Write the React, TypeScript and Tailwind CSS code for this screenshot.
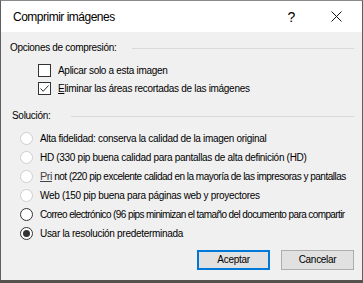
import React from "react";

function Check({ checked }: { checked?: boolean }) {
  return (
    <span className="flex h-[13px] w-[13px] shrink-0 items-center justify-center border border-[#333] bg-white">
      {checked && (
        <svg width="11" height="11" viewBox="0 0 11 11">
          <path d="M1.5 5.5 L4.2 8.3 L9.5 2.5" fill="none" stroke="#333" strokeWidth="1" />
        </svg>
      )}
    </span>
  );
}

function Radio({ disabled, checked }: { disabled?: boolean; checked?: boolean }) {
  return (
    <span
      className={`flex h-[13px] w-[13px] shrink-0 items-center justify-center rounded-full border bg-white ${
        disabled ? "border-[#cfcfcf]" : "border-[#333]"
      }`}
    >
      {checked && <span className="h-[7px] w-[7px] rounded-full bg-[#333]" />}
    </span>
  );
}

const options = [
  { label: "Alta fidelidad: conserva la calidad de la imagen original", disabled: true },
  { label: "HD (330 pip buena calidad para pantallas de alta definición (HD)", disabled: true },
  { label: "print", disabled: true },
  { label: "Web (150 pip buena para páginas web y proyectores", disabled: true },
  { label: "Correo electrónico (96 pips minimizan el tamaño del documento para compartir", tight: true },
  { label: "Usar la resolución predeterminada", checked: true },
];

export default function App() {
  return (
    <div
      className="flex h-[283px] w-[363px] flex-col overflow-hidden bg-[#55524d] text-[10px] leading-[14px] tracking-[-0.3px] text-black"
      style={{ fontFamily: '"Liberation Sans", Arial, sans-serif' }}
    >
      <div className="flex h-[280px] flex-col border-x border-t border-x-[#5f5f5f] border-t-[#8a8a8a]">
        <div className="flex h-[31px] shrink-0 items-center bg-white pl-[12px]">
          <span className="text-[12px] tracking-[-0.5px] text-black">Comprimir imágenes</span>
          <span className="ml-auto mr-[36px] text-[14px]">?</span>
          <svg width="11" height="11" viewBox="0 0 11 11" className="mr-[20px]">
            <path d="M0.5 0.5 L10.5 10.5 M10.5 0.5 L0.5 10.5" stroke="#111" strokeWidth="1" />
          </svg>
        </div>
        <div className="flex flex-1 flex-col bg-[#f0f0f0] pl-[9px] pr-[8px]">
          <div className="mt-[9px] flex h-[14px] items-center">
            <span>Opciones de compresión:</span>
            <span className="ml-[15px] h-px flex-1 bg-[#d9d9d9]" />
          </div>
          <div className="ml-[28px] mt-[9px] flex flex-col gap-[5px]">
            <div className="flex h-[13px] items-center gap-[7px]">
              <Check />
              <span>Aplicar solo a esta imagen</span>
            </div>
            <div className="flex h-[13px] items-center gap-[7px]">
              <Check checked />
              <span>
                <span className="underline">E</span>liminar las áreas recortadas de las imágenes
              </span>
            </div>
          </div>
          <div className="mt-[14px] flex h-[14px] items-center">
            <span className="ml-[2px]">Solución:</span>
            <span className="ml-[21px] h-px flex-1 bg-[#d9d9d9]" />
          </div>
          <div className="ml-[10px] mt-[9px] flex flex-col gap-[6px]">
            {options.map((o) => (
              <div key={o.label} className="flex h-[13px] items-center gap-[7px]">
                <Radio disabled={o.disabled} checked={o.checked} />
                {o.label === "print" ? (
                  <span className="whitespace-nowrap tracking-[-0.5px]">
                    <span className="text-[11px] text-[#444] underline">Pri</span> not (220 pip excelente calidad en la
                    mayoría de las impresoras y pantallas
                  </span>
                ) : (
                  <span className={`whitespace-nowrap ${o.tight ? "tracking-[-0.6px]" : ""}`}>{o.label}</span>
                )}
              </div>
            ))}
          </div>
          <div className="mt-auto mb-[10px] flex justify-end gap-[11px]">
            <button className="h-[20px] w-[73px] border-2 border-[#0078d7] bg-[#e1e1e1] text-[10px]">
              Aceptar
            </button>
            <button className="h-[20px] w-[73px] border border-[#adadad] bg-[#e1e1e1] text-[10px]">
              Cancelar
            </button>
          </div>
        </div>
      </div>
    </div>
  );
}
